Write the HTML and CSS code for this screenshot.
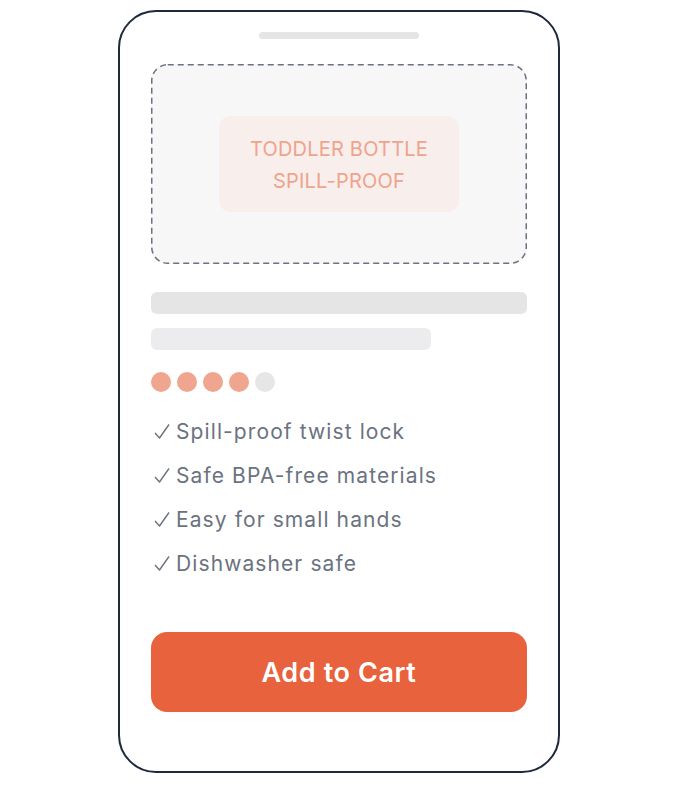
FILE: index.html
```html
<!DOCTYPE html>
<html lang="en">
<head>
<meta charset="utf-8">
<title>Toddler Bottle</title>
<link rel="stylesheet" href="styles.css">
</head>
<body>
<div class="phone">
  <div class="notch"></div>
  <div class="image-box">
    <svg class="dash-frame" width="376" height="200" viewBox="0 0 376 200" aria-hidden="true">
      <rect x="0.75" y="0.75" width="374.5" height="198.5" rx="16" ry="16" fill="none" stroke="#6b7280" stroke-width="1.5" stroke-dasharray="6 4"/>
    </svg>
    <div class="image-label">TODDLER BOTTLE<br>SPILL-PROOF</div>
  </div>
  <div class="skeleton skeleton-title"></div>
  <div class="skeleton skeleton-sub"></div>
  <div class="rating">
    <span class="dot on"></span>
    <span class="dot on"></span>
    <span class="dot on"></span>
    <span class="dot on"></span>
    <span class="dot"></span>
  </div>
  <ul class="features">
    <li><svg class="check" width="16" height="15" viewBox="0 0 16 15" aria-hidden="true"><polyline points="1,9 5.5,14 15,0.5" fill="none" stroke="currentColor" stroke-width="1.4" stroke-linejoin="round"/></svg>Spill-proof twist lock</li>
    <li><svg class="check" width="16" height="15" viewBox="0 0 16 15" aria-hidden="true"><polyline points="1,9 5.5,14 15,0.5" fill="none" stroke="currentColor" stroke-width="1.4" stroke-linejoin="round"/></svg>Safe BPA-free materials</li>
    <li><svg class="check" width="16" height="15" viewBox="0 0 16 15" aria-hidden="true"><polyline points="1,9 5.5,14 15,0.5" fill="none" stroke="currentColor" stroke-width="1.4" stroke-linejoin="round"/></svg>Easy for small hands</li>
    <li><svg class="check" width="16" height="15" viewBox="0 0 16 15" aria-hidden="true"><polyline points="1,9 5.5,14 15,0.5" fill="none" stroke="currentColor" stroke-width="1.4" stroke-linejoin="round"/></svg>Dishwasher safe</li>
  </ul>
  <button class="cart-btn">Add to Cart</button>
</div>
</body>
</html>
```
FILE: styles.css
```css
html, body {
  margin: 0;
  padding: 0;
  background: #ffffff;
}
body {
  display: flex;
  justify-content: center;
  padding-top: 10px;
  font-family: Inter, "Noto Sans", "Liberation Sans", sans-serif;
}
.phone {
  box-sizing: border-box;
  width: 442px;
  height: 763px;
  border: 2px solid #1e293b;
  border-radius: 38px;
  background: #ffffff;
  padding: 20px 31px 0;
  display: flex;
  flex-direction: column;
}
.notch {
  width: 160px;
  height: 7px;
  border-radius: 4px;
  background: #e5e5e5;
  align-self: center;
  flex-shrink: 0;
}
.image-box {
  position: relative;
  box-sizing: border-box;
  margin-top: 25px;
  height: 200px;
  border-radius: 16px;
  background: #f7f7f7;
  display: flex;
  align-items: center;
  justify-content: center;
  flex-shrink: 0;
}
.dash-frame {
  position: absolute;
  left: 0;
  top: 0;
}
.image-label {
  box-sizing: border-box;
  width: 240px;
  height: 96px;
  border-radius: 12px;
  background: #f8eeec;
  color: #eea48d;
  font-size: 20px;
  line-height: 32px;
  text-align: center;
  display: flex;
  align-items: center;
  justify-content: center;
  padding-top: 2px;
  letter-spacing: 0.2px;
}
.skeleton {
  height: 22px;
  border-radius: 6px;
  flex-shrink: 0;
}
.skeleton-title {
  margin-top: 28px;
  background: #e5e5e5;
}
.skeleton-sub {
  margin-top: 14px;
  width: 280px;
  background: #ececee;
}
.rating {
  margin-top: 22px;
  display: flex;
  gap: 6px;
}
.dot {
  width: 20px;
  height: 20px;
  border-radius: 50%;
  background: #e6e6e6;
}
.dot.on {
  background: #f0a58f;
}
.features {
  list-style: none;
  margin: 18px 0 0;
  padding: 0;
  color: #6b7280;
  font-size: 21px;
  line-height: 44px;
  letter-spacing: 1.1px;
}
.check {
  vertical-align: baseline;
  margin: 0 6px 0 3px;
}
.cart-btn {
  margin-top: 46px;
  height: 80px;
  border: none;
  border-radius: 16px;
  background: #e8623d;
  color: #ffffff;
  font-family: Inter, "Noto Sans", "Liberation Sans", sans-serif;
  font-size: 27px;
  font-weight: 600;
  letter-spacing: 0.6px;
  flex-shrink: 0;
}
```
